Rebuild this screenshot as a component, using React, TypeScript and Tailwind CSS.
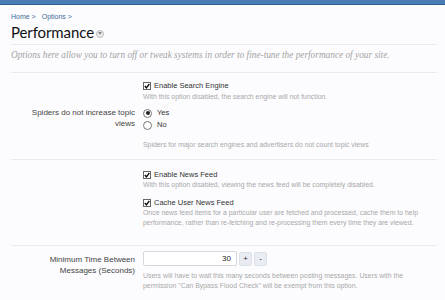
import React from "react";

const Check = () => (
  <span className="inline-flex w-[8px] h-[8px] border border-[#666] bg-white items-center justify-center mr-[3px] shrink-0">
    <svg width="6" height="6" viewBox="0 0 6 6">
      <path d="M0.8 3 L2.4 4.8 L5.3 1" stroke="#111" strokeWidth="1.4" fill="none" />
    </svg>
  </span>
);

const Radio = ({ on }: { on?: boolean }) => (
  <span className="inline-flex w-[9px] h-[9px] rounded-full border border-[#777] bg-white items-center justify-center mr-[5px] shrink-0">
    {on && <span className="w-[4px] h-[4px] rounded-full bg-[#222]" />}
  </span>
);

const Hint = ({ children }: { children: React.ReactNode }) => (
  <p className="text-[6.9px] leading-[10px] text-[#a8a8a8] whitespace-nowrap">{children}</p>
);

const Row = ({ label, children }: { label?: React.ReactNode; children: React.ReactNode }) => (
  <div className="grid grid-cols-[124px_1fr] gap-[8px]">
    <div className="text-right text-[8px] leading-[11px] text-[#444]">{label}</div>
    <div>{children}</div>
  </div>
);

const Opt = ({ children, className = "" }: { children: React.ReactNode; className?: string }) => (
  <div className={`flex items-center text-[7.5px] leading-[11px] text-[#333] ${className}`}>{children}</div>
);

export default function App() {
  return (
    <div className="w-[445px] h-[300px] overflow-hidden bg-[#fcfcfe] font-['Liberation_Sans',sans-serif]">
      <div className="h-[5px] bg-[#4a7db3] border-b border-[#2f5f91]" />
      <div className="pl-[11px] pr-[8px]">
        <div className="mt-[7px] text-[7px] leading-[9px] text-[#3d6a98] flex gap-[6px]">
          <span>Home &gt;</span>
          <span>Options &gt;</span>
        </div>
        <div className="flex items-center h-[20px] mt-[1px]">
          <h1 className="text-[15px] leading-[20px] text-[#111] font-['Lato',sans-serif] tracking-[-0.1px]">Performance</h1>
          <span className="ml-[2px] mt-[3px] w-[8px] h-[8px] rounded-full border border-[#bbb] bg-[#eee] flex items-center justify-center">
            <svg width="4" height="3" viewBox="0 0 4 3"><path d="M0 0 L4 0 L2 3 Z" fill="#888" /></svg>
          </span>
        </div>
        <div className="mt-[2px] border-t border-[#e9ebf0]" />
        <p className="h-[27px] leading-[21px] text-[9.3px] italic text-[#a3a3a3] font-['Liberation_Serif',serif]">
          Options here allow you to turn off or tweak systems in order to fine-tune the performance of your site.
        </p>
        <div className="border-t border-[#e9ebf0]" />

        <div className="pt-[7px] h-[86px]">
          <Row>
            <Opt>
              <Check />
              Enable Search Engine
            </Opt>
            <div className="mt-[1px]">
              <Hint>With this option disabled, the search engine will not function.</Hint>
            </div>
          </Row>
          <div className="mt-[5px]">
            <Row label={<>Spiders do not increase topic<br />views</>}>
              <Opt className="leading-[12px]">
                <Radio on />
                Yes
              </Opt>
              <Opt className="leading-[12px]">
                <Radio />
                No
              </Opt>
              <div className="mt-[9px]">
                <Hint>Spiders for major search engines and advertisers do not count topic views</Hint>
              </div>
            </Row>
          </div>
        </div>
        <div className="border-t border-[#e9ebf0]" />

        <div className="pt-[9px] h-[85px]">
          <Row>
            <Opt>
              <Check />
              Enable News Feed
            </Opt>
            <Hint>With this option disabled, viewing the news feed will be completely disabled.</Hint>
            <Opt className="mt-[7px]">
              <Check />
              Cache User News Feed
            </Opt>
            <Hint>
              Once news feed items for a particular user are fetched and processed, cache them to help
              <br />
              performance, rather than re-fetching and re-processing them every time they are viewed.
            </Hint>
          </Row>
        </div>
        <div className="border-t border-[#e9ebf0]" />

        <div className="pt-[5px]">
          <Row label={<div className="pt-[3px]">Minimum Time Between<br />Messages (Seconds)</div>}>
            <div className="flex items-center gap-[2px]">
              <div className="w-[94px] h-[15px] bg-white border border-[#d3d7de] rounded-[2px] text-right pr-[5px] text-[8px] leading-[13px] text-[#222]">
                30
              </div>
              <div className="w-[13px] h-[14px] rounded-[2px] bg-[#e9edf3] border border-[#dde2ea] text-[8px] leading-[12px] text-center text-[#333]">+</div>
              <div className="w-[13px] h-[14px] rounded-[2px] bg-[#e9edf3] border border-[#dde2ea] text-[8px] leading-[12px] text-center text-[#333]">-</div>
            </div>
            <div className="mt-[5px]">
              <Hint>
                Users will have to wait this many seconds between posting messages. Users with the
                <br />
                permission "Can Bypass Flood Check" will be exempt from this option.
              </Hint>
            </div>
          </Row>
        </div>
      </div>
    </div>
  );
}
